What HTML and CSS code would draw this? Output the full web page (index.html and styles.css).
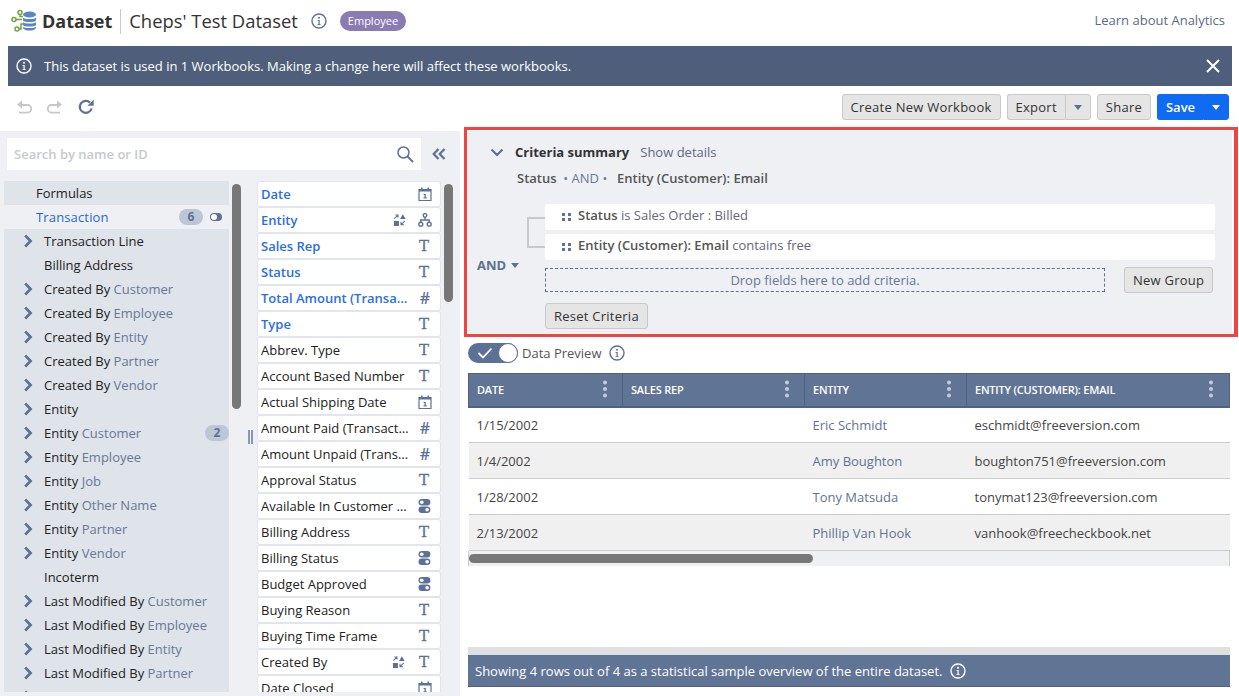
FILE: index.html
```html
<!DOCTYPE html>
<html lang="en">
<head>
    <meta charset="UTF-8">
    <title>Dataset - Cheps' Test Dataset</title>
    <link rel="stylesheet" href="styles.css">
</head>
<body>
    <svg class="defs" width="0" height="0">
        <symbol id="i-info" viewBox="0 0 16 16">
            <circle cx="8" cy="8" r="7" fill="none" stroke="currentColor" stroke-width="1.4"/>
            <circle cx="8" cy="4.8" r="1" fill="currentColor"/>
            <path d="M6.6 7h2.1v4.2h1v.9H6.4v-.9h1.1V7.9h-.9z" fill="currentColor"/>
        </symbol>
        <symbol id="i-chev" viewBox="0 0 10 14">
            <path d="M2.2 1.5 7.6 7l-5.4 5.5" fill="none" stroke="currentColor" stroke-width="2.6"/>
        </symbol>
        <symbol id="i-cal" viewBox="0 0 14 14">
            <path d="M1 2.5h12v11H1z" fill="none" stroke="currentColor" stroke-width="1.2"/>
            <path d="M1 2h12v2.6H1zM3 .5h1.6V2H3zM9.4.5H11V2H9.4z" fill="currentColor"/>
            <path d="M5.6 7h2.2v3.6h1v1H5.4v-1h1.1V8h-.9z" fill="currentColor"/>
        </symbol>
        <symbol id="i-tree" viewBox="0 0 15 15">
            <g fill="none" stroke="currentColor" stroke-width="1.5">
                <circle cx="7.5" cy="2.6" r="1.9"/>
                <circle cx="3" cy="12" r="2.1"/>
                <circle cx="12" cy="12" r="2.1"/>
                <path d="M7.5 4.5v3M3 9.8V7.5h9v2.3"/>
            </g>
        </symbol>
        <symbol id="i-swap" viewBox="0 0 14 14">
            <path d="M1 8h5.4v5.4H1zM10.6.8 13.6 6H7.6z" fill="currentColor"/>
            <path d="M1.4 5.6 5 2M2.6 1.6H5.4V4.4M12.8 8 9 11.8M8.6 9v3.2h3.2" fill="none" stroke="currentColor" stroke-width="1.1"/>
        </symbol>
        <symbol id="i-bool" viewBox="0 0 12 13">
            <rect x="0" y="0" width="11" height="6" rx="3" fill="currentColor"/>
            <rect x="0" y="7" width="11" height="6" rx="3" fill="currentColor"/>
            <circle cx="3" cy="3" r="1.7" fill="#fff"/>
            <circle cx="8" cy="10" r="1.7" fill="#fff"/>
        </symbol>
        <symbol id="i-grip" viewBox="0 0 10 8">
            <path d="M0 0h3v3H0zM6 0h3v3H6zM0 5h3v3H0zM6 5h3v3H6z" fill="currentColor"/>
        </symbol>
        <symbol id="i-kebab" viewBox="0 0 6 18">
            <circle cx="3" cy="2.5" r="2" fill="currentColor"/>
            <circle cx="3" cy="9" r="2" fill="currentColor"/>
            <circle cx="3" cy="15.5" r="2" fill="currentColor"/>
        </symbol>
    </svg>

    <header class="topbar">
        <svg class="logo" width="26" height="26" viewBox="0 0 26 26">
            <g fill="none" stroke="#6ea53c" stroke-width="1.5">
                <circle cx="9" cy="4.5" r="2"/>
                <circle cx="3" cy="11.5" r="2"/>
                <circle cx="6" cy="21" r="2"/>
                <path d="M5 11.5h6M9 6.5v2H12M8 21h2v-5h2"/>
            </g>
            <g fill="#5b86c2">
                <ellipse cx="18.5" cy="6.5" rx="6.5" ry="3"/>
                <path d="M12 9.5c1 2 12 2 13 0v3c-1 2-12 2-13 0zM12 14c1 2 12 2 13 0v3c-1 2-12 2-13 0zM12 18.5c1 2 12 2 13 0v1.5c-1 3.400-12 3.400-13 0z"/>
            </g>
        </svg>
        <span class="brand">Dataset</span>
        <span class="title">Cheps' Test Dataset</span>
        <svg class="ic-info title-info"><use href="#i-info"/></svg>
        <span class="badge">Employee</span>
        <a class="learn">Learn about Analytics</a>
    </header>

    <div class="banner">
        <svg class="ic-info"><use href="#i-info"/></svg>
        <span class="banner-text">This dataset is used in 1 Workbooks. Making a change here will affect these workbooks.</span>
        <svg class="banner-close" width="14" height="14" viewBox="0 0 14 14">
            <path d="M1 1l12 12M13 1 1 13" stroke="#fff" stroke-width="2"/>
        </svg>
    </div>

    <div class="toolbar">
        <svg class="tool" width="18" height="16" viewBox="0 0 18 16">
            <path d="M6 6h6.500a3.800 3.800 0 0 1 0 7.600H4" fill="none" stroke="#c4c7cc" stroke-width="1.800"/>
            <path d="M7 1.500v8L2 5.500z" fill="#c4c7cc"/>
        </svg>
        <svg class="tool" width="18" height="16" viewBox="0 0 18 16">
            <path d="M12 6H5.500a3.800 3.800 0 0 0 0 7.600H14" fill="none" stroke="#c4c7cc" stroke-width="1.800"/>
            <path d="M11 1.500v8l5-4z" fill="#c4c7cc"/>
        </svg>
        <svg class="tool" width="18" height="16" viewBox="0 0 18 16">
            <path d="M14.600 9.500A6 6 0 1 1 13 3.600" fill="none" stroke="#5d7196" stroke-width="2.200"/>
            <path d="M10.500 6.800h6.200V.6z" fill="#5d7196"/>
        </svg>
        <div class="toolbar-right">
            <button class="btn">Create New Workbook</button>
            <div class="split">
                <button class="btn btn-main">Export</button>
                <button class="btn btn-caret"><span class="caret"></span></button>
            </div>
            <button class="btn">Share</button>
            <div class="split split-save">
                <button class="btn btn-main">Save</button>
                <button class="btn btn-caret"><span class="caret"></span></button>
            </div>
        </div>
    </div>

    <main class="main">
        <section class="left">
            <div class="search-row">
                <div class="search">
                    <span>Search by name or ID</span>
                    <svg width="18" height="18" viewBox="0 0 18 18">
                        <circle cx="7.500" cy="7.500" r="5.500" fill="none" stroke="#5d7196" stroke-width="1.500"/>
                        <path d="M11.500 11.500 17 17" stroke="#5d7196" stroke-width="1.800"/>
                    </svg>
                </div>
                <svg class="collapse" width="14" height="12" viewBox="0 0 14 12">
                    <path d="M6.500 1 1.700 6l4.800 5M12.500 1 7.700 6l4.800 5" fill="none" stroke="#5d7196" stroke-width="2.200"/>
                </svg>
            </div>
            <div class="browse">
                <ul class="tree">
                    <li class="node top">Formulas</li>
                    <li class="node top active">Transaction<span class="count">6</span><span class="mini-toggle"></span></li>
                    <li class="node"><svg class="chev"><use href="#i-chev"/></svg>Transaction Line</li>
                    <li class="node">Billing Address</li>
                    <li class="node"><svg class="chev"><use href="#i-chev"/></svg>Created By <em>Customer</em></li>
                    <li class="node"><svg class="chev"><use href="#i-chev"/></svg>Created By <em>Employee</em></li>
                    <li class="node"><svg class="chev"><use href="#i-chev"/></svg>Created By <em>Entity</em></li>
                    <li class="node"><svg class="chev"><use href="#i-chev"/></svg>Created By <em>Partner</em></li>
                    <li class="node"><svg class="chev"><use href="#i-chev"/></svg>Created By <em>Vendor</em></li>
                    <li class="node"><svg class="chev"><use href="#i-chev"/></svg>Entity</li>
                    <li class="node"><svg class="chev"><use href="#i-chev"/></svg>Entity <em>Customer</em><span class="count">2</span></li>
                    <li class="node"><svg class="chev"><use href="#i-chev"/></svg>Entity <em>Employee</em></li>
                    <li class="node"><svg class="chev"><use href="#i-chev"/></svg>Entity <em>Job</em></li>
                    <li class="node"><svg class="chev"><use href="#i-chev"/></svg>Entity <em>Other Name</em></li>
                    <li class="node"><svg class="chev"><use href="#i-chev"/></svg>Entity <em>Partner</em></li>
                    <li class="node"><svg class="chev"><use href="#i-chev"/></svg>Entity <em>Vendor</em></li>
                    <li class="node">Incoterm</li>
                    <li class="node"><svg class="chev"><use href="#i-chev"/></svg>Last Modified By <em>Customer</em></li>
                    <li class="node"><svg class="chev"><use href="#i-chev"/></svg>Last Modified By <em>Employee</em></li>
                    <li class="node"><svg class="chev"><use href="#i-chev"/></svg>Last Modified By <em>Entity</em></li>
                    <li class="node"><svg class="chev"><use href="#i-chev"/></svg>Last Modified By <em>Partner</em></li>
                    <li class="node"><svg class="chev"><use href="#i-chev"/></svg>Last Modified By <em>Vendor</em></li>
                </ul>
                <div class="scroll-track"><div class="thumb thumb-tree"></div></div>
                <div class="gutter"><span class="handle"></span></div>
                <ul class="fields">
                    <li class="field on"><span class="name">Date</span><svg class="fi"><use href="#i-cal"/></svg></li>
                    <li class="field on"><span class="name">Entity</span><svg class="fi swap"><use href="#i-swap"/></svg><svg class="fi"><use href="#i-tree"/></svg></li>
                    <li class="field on"><span class="name">Sales Rep</span><span class="glyph">T</span></li>
                    <li class="field on"><span class="name">Status</span><span class="glyph">T</span></li>
                    <li class="field on"><span class="name">Total Amount (Transaction)</span><span class="glyph hash">#</span></li>
                    <li class="field on"><span class="name">Type</span><span class="glyph">T</span></li>
                    <li class="field"><span class="name">Abbrev. Type</span><span class="glyph">T</span></li>
                    <li class="field"><span class="name">Account Based Number</span><span class="glyph">T</span></li>
                    <li class="field"><span class="name">Actual Shipping Date</span><svg class="fi"><use href="#i-cal"/></svg></li>
                    <li class="field"><span class="name">Amount Paid (Transaction)</span><span class="glyph hash">#</span></li>
                    <li class="field"><span class="name">Amount Unpaid (Transaction)</span><span class="glyph hash">#</span></li>
                    <li class="field"><span class="name">Approval Status</span><span class="glyph">T</span></li>
                    <li class="field"><span class="name">Available In Customer Center</span><svg class="fi"><use href="#i-bool"/></svg></li>
                    <li class="field"><span class="name">Billing Address</span><span class="glyph">T</span></li>
                    <li class="field"><span class="name">Billing Status</span><svg class="fi"><use href="#i-bool"/></svg></li>
                    <li class="field"><span class="name">Budget Approved</span><svg class="fi"><use href="#i-bool"/></svg></li>
                    <li class="field"><span class="name">Buying Reason</span><span class="glyph">T</span></li>
                    <li class="field"><span class="name">Buying Time Frame</span><span class="glyph">T</span></li>
                    <li class="field"><span class="name">Created By</span><svg class="fi swap"><use href="#i-swap"/></svg><span class="glyph">T</span></li>
                    <li class="field"><span class="name">Date Closed</span><svg class="fi"><use href="#i-cal"/></svg></li>
                </ul>
                <div class="scroll-track"><div class="thumb thumb-fields"></div></div>
            </div>
        </section>

        <section class="right">
            <div class="criteria-frame">
                <div class="criteria">
                    <div class="summary-head">
                        <svg class="summary-chev" width="14" height="9" viewBox="0 0 14 9">
                            <path d="M1.500 1.500 7 7l5.500-5.500" fill="none" stroke="#5d7196" stroke-width="2.200"/>
                        </svg>
                        <strong>Criteria summary</strong>
                        <span class="show">Show details</span>
                    </div>
                    <div class="summary-line">Status <span class="and">&nbsp;• AND •&nbsp;</span> Entity (Customer): Email</div>
                    <div class="group">
                        <div class="group-side">
                            <div class="bracket"></div>
                            <div class="and-pick">AND <span class="caret"></span></div>
                        </div>
                        <div class="group-body">
                            <div class="rule"><svg class="grip"><use href="#i-grip"/></svg><b>Status</b> is Sales Order : Billed</div>
                            <div class="rule"><svg class="grip"><use href="#i-grip"/></svg><b>Entity (Customer): Email</b> contains free</div>
                            <div class="drop-row">
                                <div class="drop">Drop fields here to add criteria.</div>
                                <button class="btn">New Group</button>
                            </div>
                        </div>
                    </div>
                    <button class="btn reset">Reset Criteria</button>
                </div>
            </div>

            <div class="preview-row">
                <span class="switch">
                    <svg width="16" height="12" viewBox="0 0 16 12">
                        <path d="M1.500 6 6 10.500 14.500 1.500" fill="none" stroke="#fff" stroke-width="1.800"/>
                    </svg>
                    <span class="knob"></span>
                </span>
                <span>Data Preview</span>
                <svg class="ic-info preview-info"><use href="#i-info"/></svg>
            </div>

            <table class="grid">
                <thead>
                    <tr>
                        <th class="c-date"><div class="th">DATE<svg class="kebab"><use href="#i-kebab"/></svg></div></th>
                        <th class="c-rep"><div class="th">SALES REP<svg class="kebab"><use href="#i-kebab"/></svg></div></th>
                        <th class="c-ent"><div class="th">ENTITY<svg class="kebab"><use href="#i-kebab"/></svg></div></th>
                        <th class="c-mail"><div class="th">ENTITY (CUSTOMER): EMAIL<svg class="kebab"><use href="#i-kebab"/></svg></div></th>
                    </tr>
                </thead>
                <tbody>
                    <tr><td>1/15/2002</td><td></td><td class="link">Eric Schmidt</td><td>eschmidt@freeversion.com</td></tr>
                    <tr><td>1/4/2002</td><td></td><td class="link">Amy Boughton</td><td>boughton751@freeversion.com</td></tr>
                    <tr><td>1/28/2002</td><td></td><td class="link">Tony Matsuda</td><td>tonymat123@freeversion.com</td></tr>
                    <tr><td>2/13/2002</td><td></td><td class="link">Phillip Van Hook</td><td>vanhook@freecheckbook.net</td></tr>
                </tbody>
            </table>
            <div class="hscroll"><div class="thumb thumb-h"></div></div>

            <div class="foot">
                <div class="foot-strip"></div>
                <div class="foot-bar">
                    <span>Showing 4 rows out of 4 as a statistical sample overview of the entire dataset.</span>
                    <svg class="ic-info"><use href="#i-info"/></svg>
                </div>
            </div>
        </section>
    </main>
</body>
</html>
```

FILE: styles.css
```css
* {
    box-sizing: border-box;
}
html, body {
    height: 100%;
}
body {
    margin: 0;
    font-family: 'Open Sans', 'Noto Sans', Arial, sans-serif;
    font-size: 13px;
    color: #333;
    background-color: #fff;
    display: flex;
    flex-direction: column;
    overflow: hidden;
}
ul {
    list-style: none;
    margin: 0;
    padding: 0;
}
.defs {
    position: absolute;
}
.ic-info {
    width: 16px;
    height: 16px;
    flex: none;
}

/* header */
.topbar {
    height: 46px;
    flex: none;
    display: flex;
    align-items: center;
    padding: 0 14px 4px 11px;
}
.logo {
    margin-right: 5px;
}
.brand {
    font-size: 18px;
    font-weight: 700;
    color: #333;
    padding-right: 8px;
    margin-right: 8px;
    border-right: 1px solid #c5ccd8;
    line-height: 25px;
}
.title {
    font-size: 18.4px;
    color: #333;
    padding-bottom: 2px;
}
.title-info {
    margin-left: 13px;
    color: #5d7196;
}
.badge {
    margin-left: 13px;
    background-color: #8b7bb3;
    color: #fff;
    font-size: 11px;
    line-height: 20px;
    padding: 0 8px;
    border-radius: 10px;
}
.learn {
    margin-left: auto;
    margin-bottom: 2px;
    color: #5b6a85;
    font-size: 13px;
}
.banner {
    height: 40px;
    flex: none;
    margin: 0 7px 0 8px;
    padding: 0 12px 0 8px;
    background-color: #4f5f7b;
    color: #fff;
    display: flex;
    align-items: center;
}
.banner-text {
    margin-left: 12px;
}
.banner-close {
    margin-left: auto;
}
.toolbar {
    height: 45px;
    flex: none;
    display: flex;
    align-items: center;
    padding: 0 10px 3px 15px;
    gap: 13px;
}
.toolbar-right {
    margin-left: auto;
    display: flex;
    gap: 6px;
}
.btn {
    height: 26px;
    padding: 0 8px;
    font-family: inherit;
    font-size: 13px;
    font-weight: 500;
    letter-spacing: .25px;
    color: #333;
    background-color: #e5e5e5;
    border: 1px solid #c9c9c9;
    border-radius: 3px;
}
.split {
    display: flex;
}
.split .btn-main {
    border-radius: 3px 0 0 3px;
    border-right: none;
}
.split .btn-caret {
    width: 26px;
    padding: 0;
    border-radius: 0 3px 3px 0;
    display: flex;
    align-items: center;
    justify-content: center;
}
.caret {
    display: inline-block;
    width: 0;
    height: 0;
    border-left: 4.5px solid transparent;
    border-right: 4.5px solid transparent;
    border-top: 5px solid #5d7196;
}
.split-save .btn {
    background-color: #0f6cf2;
    border-color: #0f6cf2;
    color: #fff;
    font-weight: 600;
    letter-spacing: 0;
}
.split-save .btn-main {
    width: 46px;
    padding: 0;
}
.split-save .caret {
    border-top-color: #fff;
}

/* main area */
.main {
    flex: 1;
    min-height: 0;
    display: flex;
}
.left {
    width: 460px;
    flex: none;
    background-color: #eef0f4;
    display: flex;
    flex-direction: column;
    padding: 7px 0 4px 4px;
}
.search-row {
    display: flex;
    align-items: center;
    margin-left: 3px;
    flex: none;
}
.search {
    width: 414px;
    height: 32px;
    background-color: #fff;
    display: flex;
    align-items: center;
    justify-content: space-between;
    padding: 0 7px;
    color: #c6c9ce;
    font-weight: 600;
}
.collapse {
    margin-left: 11px;
}
.browse {
    flex: 1;
    min-height: 0;
    margin-top: 11px;
    display: flex;
    overflow: hidden;
}
.tree {
    width: 225px;
    flex: none;
    background-color: #dfe3ea;
    overflow: hidden;
}
.node {
    height: 24px;
    line-height: 24px;
    padding-left: 40px;
    color: #222;
    display: flex;
    align-items: center;
    white-space: pre;
}
.node em {
    font-style: normal;
    color: #667896;
}
.node.top {
    padding-left: 32px;
}
.node.active {
    background-color: #eef0f4;
    color: #1f66e5;
    letter-spacing: .15px;
}
.chev {
    width: 10px;
    height: 14px;
    margin: 0 11px 0 -21px;
    color: #5d7196;
    flex: none;
}
.count {
    margin-left: auto;
    width: 24px;
    height: 16px;
    line-height: 16px;
    border-radius: 8px;
    background-color: #bcc6d6;
    color: #5d7196;
    font-size: 12px;
    font-weight: 700;
    text-align: center;
}
.active .count {
    margin-right: 7px;
}
.mini-toggle {
    width: 12px;
    height: 8px;
    border-radius: 4px;
    background-color: #5d7196;
    margin-right: 7px;
    display: flex;
    align-items: center;
    padding-left: 1px;
}
.mini-toggle::before {
    content: "";
    width: 6px;
    height: 6px;
    border-radius: 50%;
    background-color: #fff;
}
.scroll-track {
    width: 15px;
    flex: none;
    padding: 3px 3px;
}
.thumb {
    background-color: #777;
    border-radius: 5px;
}
.thumb-tree {
    width: 9px;
    height: 225px;
}
.thumb-fields {
    width: 9px;
    height: 118px;
}
.gutter {
    width: 13px;
    flex: none;
    padding: 249px 0 0 4px;
}
.handle {
    display: block;
    width: 5px;
    height: 14px;
    border-left: 2px solid #8a97ad;
    border-right: 2px solid #8a97ad;
}
.fields {
    width: 184px;
    flex: none;
    overflow: hidden;
    padding: 1px 1px 0;
}
.field {
    height: 24px;
    margin-bottom: 2px;
    padding: 0 8px 0 3px;
    background-color: #fff;
    border-radius: 2px;
    box-shadow: 0 0 0 1px #e2e5eb;
    display: flex;
    align-items: center;
    color: #222;
}
.field.on {
    color: #2a6ee8;
    font-weight: 600;
}
.name {
    flex: 1;
    min-width: 0;
    max-width: 150px;
    margin-right: auto;
    white-space: nowrap;
    overflow: hidden;
    text-overflow: ellipsis;
}
.fi {
    width: 14px;
    height: 14px;
    flex: none;
    color: #5d7196;
}
.fi.swap {
    width: 13px;
    margin: 0 12px 0 0;
}
.glyph {
    width: 14px;
    margin-right: 1px;
    text-align: center;
    flex: none;
    font-family: 'DejaVu Serif', serif;
    font-weight: 400;
    font-size: 15px;
    line-height: 18px;
    -webkit-text-stroke: .3px #5d7196;
    color: #5d7196;
}
.glyph.hash {
    font-family: 'Open Sans', sans-serif;
    font-weight: 600;
    font-size: 16px;
    margin-right: 0;
    -webkit-text-stroke: 0;
}

/* right column */
.right {
    width: 764px;
    flex: none;
    margin-left: 8px;
    padding-bottom: 9px;
    display: flex;
    flex-direction: column;
}
.criteria-frame {
    flex: none;
    margin: -4px -6px -4px -4px;
    border: solid #f44242;
    border-width: 3px 4px 3px 3px;
    padding: 1px 2px 1px 1px;
}
.criteria {
    height: 202px;
    background-color: #eef0f4;
    padding: 12px 17px 0 9px;
}
.summary-head {
    display: flex;
    align-items: center;
    height: 18px;
    color: #333;
}
.summary-chev {
    margin: 0 11px 0 13px;
}
.show {
    margin-left: 11px;
    color: #5b6a85;
}
.summary-line {
    margin: 8px 0 0 40px;
    font-weight: 600;
    color: #555;
    line-height: 18px;
}
.and {
    color: #667896;
    font-weight: 400;
    padding-right: 3px;
}
.group {
    display: flex;
    margin-top: 17px;
}
.group-side {
    width: 68px;
    flex: none;
}
.bracket {
    height: 31px;
    margin: 13px 0 0 50px;
    border: 2px solid #c8c8c8;
    border-right: none;
}
.and-pick {
    margin-top: 8px;
    font-weight: 700;
    color: #5d7196;
    line-height: 18px;
}
.and-pick .caret {
    margin-left: 1px;
    vertical-align: 2px;
}
.group-body {
    flex: 1;
}
.rule {
    height: 26px;
    margin-bottom: 4px;
    background-color: #fff;
    border-radius: 3px;
    padding: 0 0 5px 17px;
    display: flex;
    align-items: center;
    white-space: pre;
    color: #667;
}
.rule b {
    font-weight: 600;
    color: #555;
}
.grip {
    width: 10px;
    height: 8px;
    margin: 5px 6px 0 0;
    color: #5d7196;
    flex: none;
}
.drop-row {
    display: flex;
    align-items: center;
    gap: 19px;
    margin-top: 7px;
}
.drop {
    width: 560px;
    height: 24px;
    border: 1px dashed #5d7196;
    color: #667896;
    text-align: center;
    line-height: 22px;
}
.reset {
    margin: 10px 0 0 68px;
}
.preview-row {
    height: 40px;
    flex: none;
    display: flex;
    align-items: center;
    color: #555;
}
.switch {
    width: 50px;
    height: 20px;
    border-radius: 10px;
    background-color: #5d7196;
    display: flex;
    align-items: center;
    justify-content: space-between;
    padding-left: 9px;
    margin-right: 4px;
}
.knob {
    width: 20px;
    height: 20px;
    border-radius: 50%;
    background-color: #fff;
    border: 1px solid #5d7196;
}
.preview-info {
    margin-left: 8px;
    color: #5d7196;
}
.grid {
    width: 762px;
    flex: none;
    border-collapse: collapse;
    table-layout: fixed;
}
.grid th {
    height: 33px;
    padding: 0;
    background-color: #607596;
    border: 1px solid #4f6080;
    border-width: 1px 1px 2px;
    color: #fff;
    font-size: 11px;
    font-weight: 600;
    letter-spacing: -.2px;
    text-align: left;
}
.th {
    display: flex;
    align-items: center;
    justify-content: space-between;
    padding: 0 14px 0 8px;
}
.c-mail .th {
    padding-right: 15px;
}
.kebab {
    width: 6px;
    height: 18px;
    margin-bottom: 2px;
    color: #c3cbd8;
    flex: none;
}
.c-date {
    width: 154px;
}
.c-rep {
    width: 182px;
}
.c-ent {
    width: 162px;
}
.grid td {
    height: 36px;
    padding: 0 0 0 8px;
    border-bottom: 1px solid #ccc;
    color: #444;
}
.grid tbody tr:nth-child(even) td {
    background-color: #f0f0f0;
}
.grid td.link {
    color: #5f7396;
}
.hscroll {
    width: 762px;
    height: 15px;
    flex: none;
    background-color: #eef0f4;
    border: 1px solid #ccc;
    border-width: 0 1px;
    padding-top: 3px;
}
.thumb-h {
    width: 344px;
    height: 9px;
}
.foot {
    margin-top: auto;
    width: 762px;
    flex: none;
}
.foot-strip {
    height: 8px;
    background-color: #e0e0e0;
}
.foot-bar {
    height: 32px;
    background-color: #607596;
    border-bottom: 1px solid #4f6080;
    color: #fff;
    display: flex;
    align-items: center;
    gap: 8px;
    padding-left: 7px;
}
```
